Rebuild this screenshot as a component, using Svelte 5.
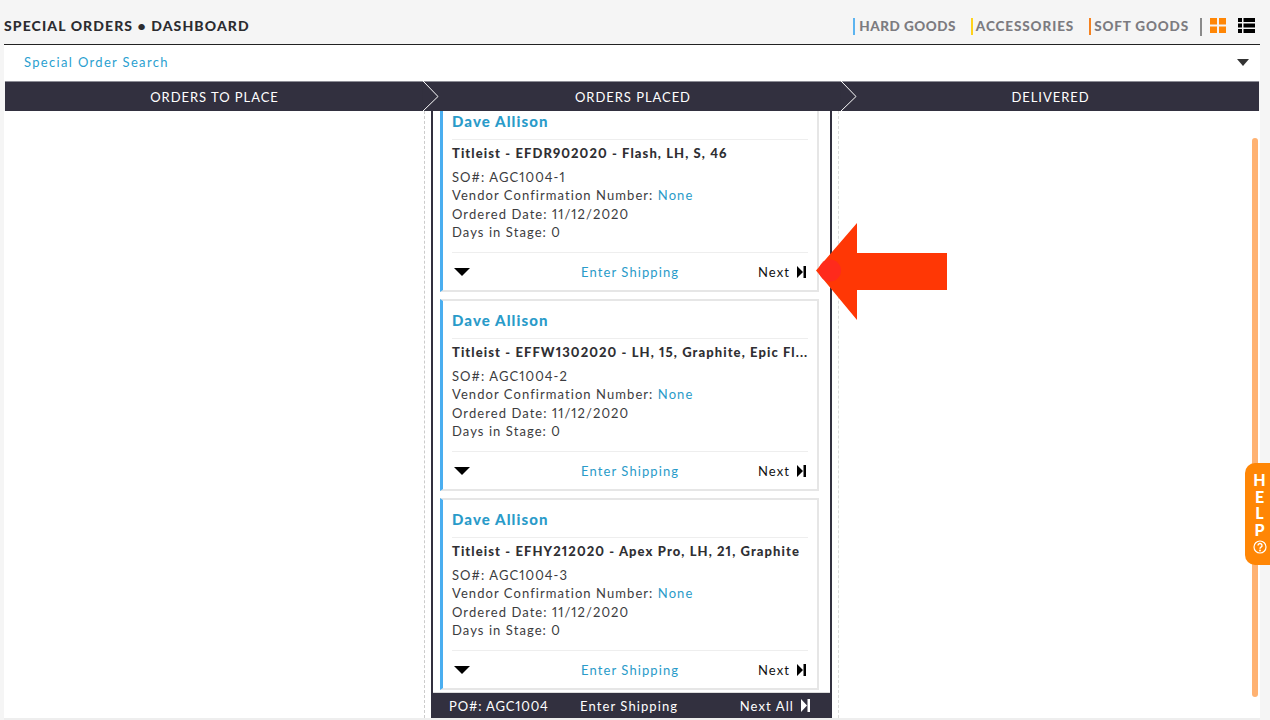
<script>
  const cards = [
    { title: 'Titleist - EFDR902020 - Flash, LH, S, 46', so: 'AGC1004-1' },
    { title: 'Titleist - EFFW1302020 - LH, 15, Graphite, Epic Fl...', so: 'AGC1004-2' },
    { title: 'Titleist - EFHY212020 - Apex Pro, LH, 21, Graphite', so: 'AGC1004-3' }
  ];
</script>

<div class="page">
  <header class="top">
    <h1>SPECIAL ORDERS <span class="dot">•</span> DASHBOARD</h1>
    <nav class="cats">
      <span class="cat hard">HARD GOODS</span>
      <span class="cat acc">ACCESSORIES</span>
      <span class="cat soft">SOFT GOODS</span>
      <span class="sep"></span>
      <svg class="view" width="16" height="15" viewBox="0 0 16 15" aria-hidden="true">
        <path fill="#ff8605" d="M0 0h7v6.500H0zM9 0h7v6.500H9zM0 8.500h7V15H0zM9 8.500h7V15H9z" />
      </svg>
      <svg class="view" width="17" height="15" viewBox="0 0 17 15" aria-hidden="true">
        <path fill="#000" d="M0 0h4v4H0zM5.500 0H17v4H5.500zM0 5.500h4v4H0zM5.500 5.500H17v4H5.500zM0 11h4v4H0zM5.500 11H17v4H5.500z" />
      </svg>
    </nav>
  </header>

  <div class="search">
    <span>Special Order Search</span>
    <i class="caret small"></i>
  </div>

  <div class="stages">
    <div class="stage">ORDERS TO PLACE<svg class="chev" width="18" height="32" viewBox="0 0 18 32" aria-hidden="true"><path d="M1 0l15 15.500L0 31" fill="#32303f" stroke="#fff" /></svg></div>
    <div class="stage">ORDERS PLACED<svg class="chev" width="18" height="32" viewBox="0 0 18 32" aria-hidden="true"><path d="M1 0l15 15.500L0 31" fill="#32303f" stroke="#fff" /></svg></div>
    <div class="stage">DELIVERED</div>
  </div>

  <main class="board">
    <section class="col"></section>
    <section class="col mid">
      <div class="po">
        <div class="list">
          {#each cards as c}
            <article class="card">
              <h2>Dave Allison</h2>
              <h3>{c.title}</h3>
              <div class="info">
                <div>SO#: {c.so}</div>
                <div>Vendor Confirmation Number: <span class="link">None</span></div>
                <div>Ordered Date: 11/12/2020</div>
                <div>Days in Stage: 0</div>
              </div>
              <div class="actions">
                <i class="caret"></i>
                <span class="link ship">Enter Shipping</span>
                <span class="next">Next
                  <svg width="9" height="12" viewBox="0 0 9 12" aria-hidden="true"><path fill="#000" d="M0 0l6 6-6 6zM6.500 0H9v12H6.500z" /></svg>
                </span>
              </div>
            </article>
          {/each}
        </div>
        <footer class="po-foot">
          <span class="po-no">PO#: AGC1004</span>
          <span class="foot-ship">Enter Shipping</span>
          <span class="next">Next All
            <svg width="9" height="13" viewBox="0 0 9 13" aria-hidden="true"><path fill="#fff" d="M0 0l6 6.500-6 6.500zM6.500 0H9v13H6.500z" /></svg>
          </span>
        </footer>
      </div>
    </section>
    <section class="col"></section>
  </main>

  <div class="scroll"></div>

  <div class="help">
    <span>H</span><span>E</span><span>L</span><span>P</span>
    <svg width="14" height="14" viewBox="0 0 14 14" aria-hidden="true">
      <circle cx="7" cy="7" r="6" fill="none" stroke="#fff" stroke-width="1.200" />
      <path d="M5 5.500a2 2 0 1 1 3 1.700c-.7.400-1 .8-1 1.500" fill="none" stroke="#fff" stroke-width="1.400" />
      <circle cx="7" cy="10.500" r=".9" fill="#fff" />
    </svg>
  </div>

  <svg class="arrow" width="132" height="98" viewBox="0 0 132 98" aria-hidden="true">
    <path fill="#ff3705" d="M0 47.500L41 0v30h90v37H41v30z" />
    <circle cx="14" cy="47.500" r="11" fill="#ff2a1c" />
  </svg>
</div>

<style>
  :global(body) {
    margin: 0;
    background: #f5f5f5;
  }
  .page {
    position: relative;
    width: 1270px;
    height: 720px;
    overflow: hidden;
    box-sizing: border-box;
    padding-left: 4px;
    padding-right: 10px;
    font-family: Lato, "Liberation Sans", sans-serif;
    font-variant-numeric: proportional-nums;
    color: #333;
  }
  .top {
    display: flex;
    align-items: center;
    justify-content: space-between;
    padding-top: 7px;
    box-sizing: border-box;
    border-bottom: 1px solid #222;
    height: 45px;
  }
  h1 {
    margin: 0;
    font-size: 14px;
    font-weight: 900;
    letter-spacing: 1.100px;
    color: #2c2c30;
  }
  .dot { font-size: 14px; line-height: 14px; }
  .cats {
    display: flex;
    align-items: center;
    padding: 2px 5px 0 0;
    height: 20px;
  }
  .cat {
    font-size: 13.500px;
    font-weight: 900;
    letter-spacing: 0.900px;
    color: #7c7b80;
    border-left: 2px solid;
    padding-left: 4px;
    line-height: 17px;
    margin-right: 15px;
  }
  .hard { border-color: #5cb4f0; letter-spacing: 0.500px; margin-right: 15px; }
  .acc { border-color: #ffd21c; padding-left: 3px; }
  .soft { border-color: #f58220; padding-left: 3px; margin-right: 11px; letter-spacing: 0.850px; }
  .sep {
    width: 2px;
    height: 18px;
    background: #8a8a8a;
    margin-right: 8px;
  }
  .view { margin-right: 12px; position: relative; top: -1px; }
  .view:last-child { margin-right: 0; }

  .search {
    height: 36px;
    background: #fff;
    display: flex;
    align-items: center;
    justify-content: space-between;
    padding: 0 11px 2px 20px;
    box-sizing: border-box;
    font-size: 13px;
    letter-spacing: 1.330px;
    color: #2a9fd0;
  }
  .caret {
    width: 0;
    height: 0;
    border-left: 8px solid transparent;
    border-right: 8px solid transparent;
    border-top: 8px solid #000;
  }
  .caret.small {
    border-left-width: 6.500px;
    border-right-width: 6.500px;
    border-top: 7px solid #333;
  }

  .stages {
    position: relative;
    z-index: 2;
    margin-left: 1px;
    display: grid;
    grid-template-columns: 419px 418px 417px;
    height: 30px;
    background: #32303f;
    border-top: 1px solid #8d8d96;
    box-sizing: border-box;
    margin-right: 1px;
  }
  .stage {
    position: relative;
    display: flex;
    align-items: center;
    justify-content: center;
    color: #fff;
    font-size: 13px;
    letter-spacing: 0.950px;
  }
  .chev {
    position: absolute;
    right: -16px;
    top: -1px;
  }

  .board {
    display: grid;
    grid-template-columns: 420px 418px 418px;
    grid-template-rows: minmax(0, 1fr);
    height: 607px;
    background: #fff;
    border-bottom: 2px solid #eee;
  }
  .col { min-width: 0; }
  .mid {
    display: flex;
    justify-content: flex-start;
    border-left: 1px dashed #ccc;
    border-right: 1px dashed #ddd;
    margin-right: 3px;
    padding-left: 6px;
  }
  .po {
    width: 401px;
    flex: none;
    box-sizing: border-box;
    border-left: 2px solid #32303f;
    border-right: 2px solid #32303f;
    display: flex;
    flex-direction: column;
    overflow: hidden;
  }
  .list {
    flex: 1;
    min-height: 0;
    display: flex;
    flex-direction: column;
    justify-content: flex-end;
    gap: 7px;
    padding: 0 11px 2px 7px;
  }
  .card {
    flex: none;
    height: 192px;
    box-sizing: border-box;
    background: #fff;
    border: 2px solid #e6e6e6;
    border-left: 3px solid #4aaef0;
    padding: 10px 9px 0 9px;
    display: flex;
    flex-direction: column;
  }
  h2 {
    margin: 0;
    font-size: 15px;
    line-height: 19px;
    font-weight: 900;
    letter-spacing: 1.100px;
    color: #2a9bc9;
    padding-bottom: 8px;
    border-bottom: 1px solid #eee;
  }
  h3 {
    margin: 5px 0 0;
    font-size: 13px;
    line-height: 17px;
    font-weight: 900;
    letter-spacing: 1.090px;
    color: #2f2f33;
    white-space: nowrap;
  }
  .info {
    margin-top: 6px;
    font-size: 13px;
    line-height: 18.400px;
    letter-spacing: 1.070px;
    color: #3c3c40;
    padding-bottom: 10px;
    border-bottom: 1px solid #eee;
  }
  .link { color: #2a9bc9; }
  .actions {
    flex: 1;
    position: relative;
    display: flex;
    align-items: center;
    justify-content: space-between;
    font-size: 13px;
    letter-spacing: 1.100px;
    padding: 2px 2px 0;
  }
  .ship {
    position: absolute;
    left: 129px;
  }
  .next {
    display: inline-flex;
    align-items: center;
    gap: 7px;
    color: #111;
  }
  .po-foot {
    position: relative;
    flex: none;
    height: 26px;
    margin: 0 -2px;
    background: #32303f;
    border-top: 1px solid #dcdcdc;
    box-sizing: border-box;
    color: #fff;
    display: flex;
    align-items: center;
    justify-content: space-between;
    padding: 0 22px 0 18px;
    font-size: 13px;
    letter-spacing: 1.100px;
  }
  .po-no { letter-spacing: 0.850px; }
  .foot-ship {
    position: absolute;
    left: 149px;
  }
  .po-foot .next { color: #fff; }

  .scroll {
    position: absolute;
    left: 1252px;
    top: 138px;
    width: 6px;
    height: 559px;
    border-radius: 3px;
    background: #ffb272;
    z-index: 3;
  }
  .help {
    position: absolute;
    left: 1245px;
    top: 463px;
    width: 25px;
    height: 102px;
    box-sizing: border-box;
    padding: 9px 0 0 4px;
    border-radius: 10px 0 0 10px;
    background: #ff8605;
    color: #fff;
    font-size: 16px;
    font-weight: 900;
    line-height: 16.500px;
    display: flex;
    flex-direction: column;
    align-items: center;
    z-index: 4;
  }
  .help svg { margin-top: 2px; }
  .arrow {
    position: absolute;
    left: 816px;
    top: 223px;
    z-index: 5;
  }
</style>
